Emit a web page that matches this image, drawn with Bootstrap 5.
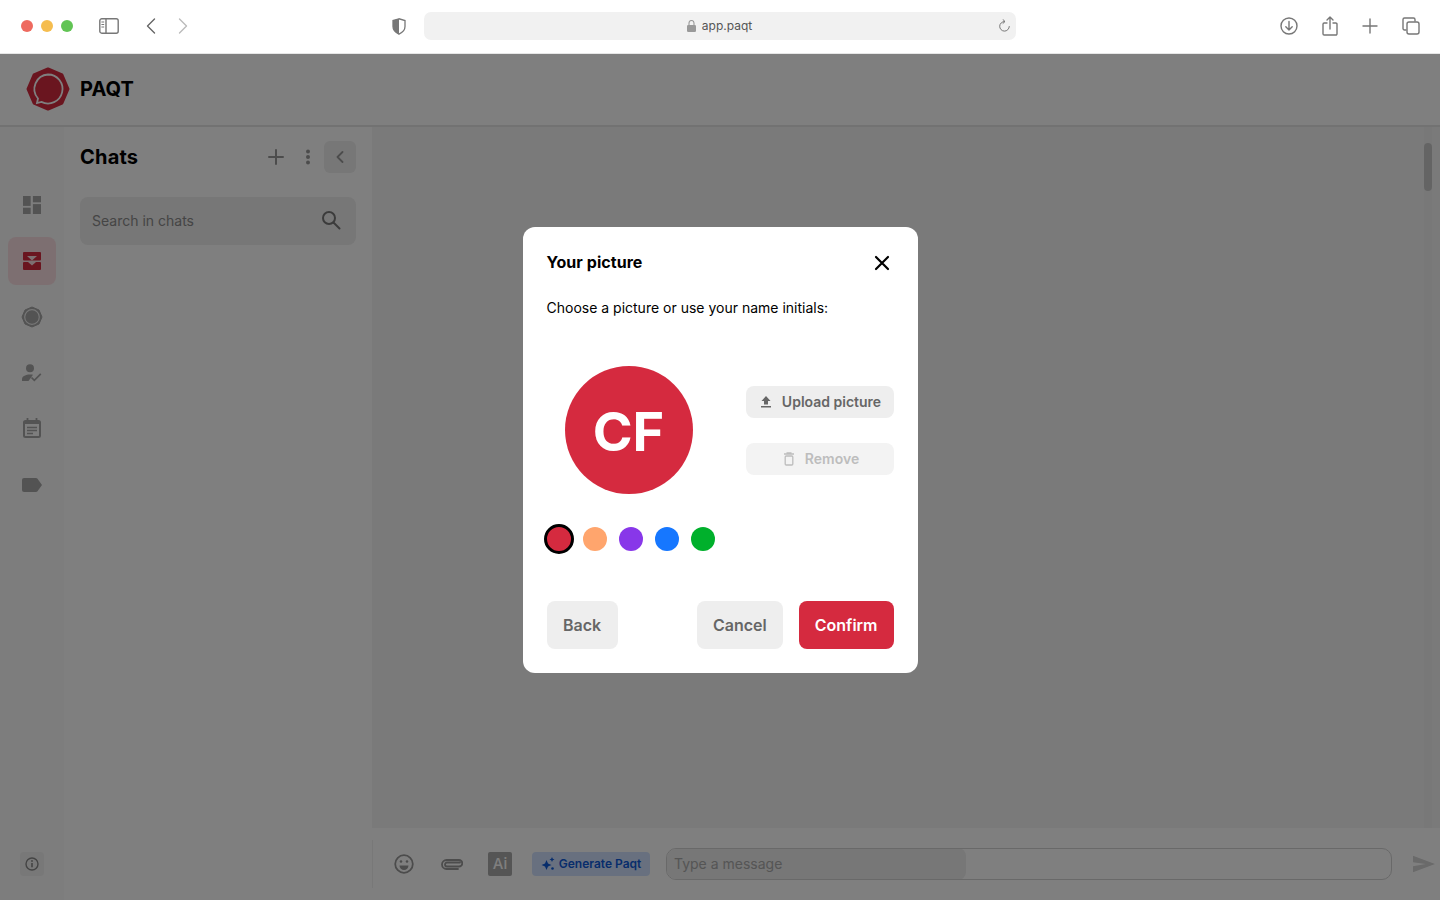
<!DOCTYPE html>
<html lang="en">
<head>
<meta charset="utf-8">
<title>PAQT</title>
<link href="https://cdn.jsdelivr.net/npm/bootstrap@5.3.0/dist/css/bootstrap.min.css" rel="stylesheet">
<style>
html,body{height:100%;overflow:hidden}
body{font-family:Inter,"Liberation Sans",sans-serif;background:#fff;color:#000}
.shell{height:900px;display:flex;flex-direction:column}
.safari{height:54px;flex:none;background:#fff;border-bottom:1px solid #e6e6e6;padding:0 20px 1px 21px}
.tl{width:12px;height:12px;border-radius:50%}
.tl-r{background:#ee6a5f}.tl-y{background:#f5bd4f}.tl-g{background:#61c454}
.tls{gap:8px;margin-right:26px}
.ci{stroke:#777;fill:none;stroke-width:1.4;stroke-linecap:round;stroke-linejoin:round;display:block}
.nav-pair{gap:22px;margin-left:27px}
.shield{margin-left:204px;margin-right:18px}
.urlbar{width:592px;height:28px;background:#f1f1f1;border-radius:7px;font-size:12px;color:#555;padding:0 6px 0 5px}
.url-mid{flex:1;gap:6px;padding-left:12px}
.rt-icons{gap:24px;margin-left:auto}
.appwrap{flex:1;min-height:0;position:relative;display:flex;flex-direction:column;background:#fff}
.apphead{height:73px;flex:none;padding:0 0 2px 26px;gap:10px;background:#fff;border-bottom:2px solid #e4e4e4}
.brand{font-size:20px;font-weight:700;letter-spacing:.1px}
.appbody{flex:1;min-height:0;display:flex}
.rail{width:64px;flex:none;background:#fafafa;padding:54px 8px 0}
.railbtn{width:48px;height:48px;border-radius:8px;margin-bottom:8px}
.railbtn.on{background:#fbdfe3}
.railinfo{width:24px;height:24px;background:#f1f1f1;border-radius:4px;margin:auto 0 24px 12px}
.panel{width:308px;flex:none;background:#fff;padding:14px 16px 0}
.panelhead{height:32px}
.paneltitle{font-size:20px;font-weight:700;letter-spacing:.2px;margin:0;line-height:32px}
.collapse-btn{width:32px;height:32px;background:#eee;border-radius:6px}
.searchbox{height:48px;background:#eee;border-radius:8px;margin-top:24px;padding:0 15px 2px 12px;font-size:14px;color:#8a8a8a}
.mainarea{flex:1;min-width:0;display:flex;flex-direction:column}
.chatarea{flex:1;min-height:0;background:#f5f5f5;padding:0 8px 0 0}
.sb-track{width:8px;height:100%;background:#f0f0f0}
.sb-thumb{width:8px;height:48px;background:#c9c9c9;border-radius:4px;margin-top:16px}
.composer{height:72px;flex:none;background:#fff}
.vline{width:1px;height:48px;background:#f0f0f0;margin-right:19px}
.cbtn{width:24px;height:24px}
.aibox{width:24px;height:24px;background:#aaa;border-radius:2px;color:#fff;font-size:15px;font-weight:500;margin:0 20px 0 24px}
.genbtn{width:118px;height:24px;background:#d1e1ff;border-radius:4px;color:#0e5ad8;font-size:12px;font-weight:600;gap:4px;margin-right:16px;white-space:nowrap}
.msgbox{width:726px;height:32px;flex:none;border:1px solid #d2d2d2;border-radius:10px;position:relative;overflow:hidden;margin-right:21px}
.msgfill{width:300px;background:#eee;border-radius:0 8px 8px 0;margin:-1px 0 0 -1px;height:32px;font-size:14px;color:#aaa;padding-left:8px;line-height:32px}
.scrim{position:absolute;inset:0;background:rgba(0,0,0,.5);display:flex;justify-content:center;align-items:flex-start;padding-top:173px}
.dlg{width:395px;height:446px;background:#fff;border-radius:12px;padding:24px;display:flex;flex-direction:column}
.dlg-title{font-size:16px;font-weight:700;line-height:22px;margin:0;letter-spacing:.05px}
.dlg-text{font-size:14px;line-height:20px;margin:25px 0 0;letter-spacing:0}
.picrow{margin-top:48px;height:128px;padding-left:18px}
.avatar-big{width:128px;height:128px;border-radius:50%;background:#d52a3f;color:#fff;font-size:54px;font-weight:700;padding-top:2px}
.sidebtns{width:148px;margin-left:auto;padding-top:20px}
.softbtn{height:32px;width:148px;background:#eee;border-radius:8px;border:0;color:#666;font-size:14px;font-weight:600;gap:10px;padding:0 0 1px 2px}
.softbtn.off{background:#f3f3f3;color:#bdbdbd;margin-top:25px;gap:11px;padding-left:4px}
.swatches{margin-top:30px;height:30px;gap:12px}
.swatch{width:24px;height:24px;border-radius:50%}
.swatch.sel{width:30px;height:30px;border:3px solid #000;margin:0 -3px 0 -3px}
.dlg-foot{margin-top:auto;gap:16px}
.dbtn{height:48px;border-radius:8px;border:0;font-size:16px;font-weight:600;padding:0 16px;background:#eee;color:#666}
.dbtn.back{width:71px;padding:0}
.dbtn.prim{background:#d52a3f;color:#fff}
</style>
</head>
<body>
<div class="shell">
  <div class="safari d-flex align-items-center">
    <div class="d-flex tls"><span class="tl tl-r"></span><span class="tl tl-y"></span><span class="tl tl-g"></span></div>
    <svg class="ci" width="20" height="16" viewBox="0 0 20 16"><rect x=".8" y=".8" width="18.4" height="14.4" rx="2"/><path d="M7 1v14"/><path d="M2.8 4h2M2.8 6.5h2M2.8 9h2" stroke-width="1"/></svg>
    <div class="d-flex nav-pair">
      <svg class="ci" width="10" height="16" viewBox="0 0 10 16" style="stroke:#666"><path d="M8.5 1 1.5 8l7 7"/></svg>
      <svg class="ci" width="10" height="16" viewBox="0 0 10 16" style="stroke:#bbb"><path d="M1.5 1l7 7-7 7"/></svg>
    </div>
    <svg class="shield" width="14" height="17" viewBox="0 0 14 17"><path d="M7 .8 1 2.6v6c0 3.500 2.500 6 6 7.600 3.500-1.600 6-4.100 6-7.600v-6z" fill="#fff" stroke="#777" stroke-width="1.300"/><path d="M7 .8 1 2.600v6c0 3.500 2.500 6 6 7.600z" fill="#777"/></svg>
    <div class="urlbar d-flex align-items-center">
      <div class="url-mid d-flex align-items-center justify-content-center">
        <svg width="9" height="12" viewBox="0 0 9 12"><rect x="0" y="5" width="9" height="7" rx="1.300" fill="#999"/><path d="M2 5V3a2.500 2.500 0 0 1 5 0v2" fill="none" stroke="#999" stroke-width="1.100"/></svg>
        <span>app.paqt</span>
      </div>
      <svg class="ci" width="12" height="14" viewBox="0 0 12 14" style="stroke-width:1"><path d="M6.500 2.500a4.800 4.800 0 1 0 4.800 5"/><path d="M5 .6l2 1.900-2 1.900"/></svg>
    </div>
    <div class="d-flex align-items-center rt-icons">
      <svg class="ci" width="18" height="18" viewBox="0 0 18 18"><circle cx="9" cy="9" r="8"/><path d="M9 4.500v8.500M5.800 9.800 9 13l3.200-3.200"/></svg>
      <svg class="ci" width="16" height="20" viewBox="0 0 16 20"><path d="M5 7H2.200A1.200 1.200 0 0 0 1 8.200v9.600A1.200 1.200 0 0 0 2.200 19h11.600a1.200 1.200 0 0 0 1.200-1.200V8.200A1.200 1.200 0 0 0 13.800 7H11"/><path d="M8 13V1M5 4l3-3 3 3"/></svg>
      <svg class="ci" width="16" height="16" viewBox="0 0 16 16"><path d="M8 1v14M1 8h14"/></svg>
      <svg class="ci" width="18" height="18" viewBox="0 0 18 18"><path d="M4 13H2.500A1.500 1.500 0 0 1 1 11.500v-9A1.500 1.500 0 0 1 2.500 1h9A1.500 1.500 0 0 1 13 2.500V4"/><rect x="5" y="5" width="12" height="12" rx="2"/></svg>
    </div>
  </div>

  <div class="appwrap">
    <div class="apphead d-flex align-items-center">
      <svg width="44" height="44" viewBox="0 0 44 44"><polygon points="22,2 36,8 42,22 36,36 22,42 8,36 2,22 8,8" fill="#d52a3f" stroke="#d52a3f" stroke-width="3" stroke-linejoin="round"/><path d="M22 7.500a14.500 14.500 0 1 1-6.600 27.400L11 36l1-4.500A14.500 14.500 0 0 1 22 7.500z" fill="none" stroke="#fff" stroke-width="1.800"/></svg>
      <div class="brand">PAQT</div>
    </div>
    <div class="appbody">
      <div class="rail d-flex flex-column">
        <div class="railbtn d-flex align-items-center justify-content-center">
          <svg width="18" height="18" viewBox="0 0 20 20" fill="#a6a6a6"><rect width="8.500" height="11"/><rect x="11" width="9" height="7"/><rect y="13" width="8.500" height="7"/><rect x="11" y="9" width="9" height="11"/></svg>
        </div>
        <div class="railbtn on d-flex align-items-center justify-content-center">
          <svg width="18" height="18" viewBox="0 0 18 18"><rect width="18" height="8.500" rx="1" fill="#d52a3f"/><path d="M4 4h10L9 8.500z" fill="#fbdfe3"/><rect y="10" width="18" height="8" rx="1" fill="#d52a3f"/><path d="M5 10h8L9 13.500z" fill="#fbdfe3"/></svg>
        </div>
        <div class="railbtn d-flex align-items-center justify-content-center">
          <svg width="22" height="22" viewBox="0 0 22 22"><polygon points="11,1 18,4 21,11 18,18 11,21 4,18 1,11 4,4" fill="#a6a6a6" stroke="#a6a6a6" stroke-linejoin="round"/><circle cx="11" cy="11" r="7.300" fill="#a6a6a6" stroke="#eee" stroke-width="1.200"/></svg>
        </div>
        <div class="railbtn d-flex align-items-center justify-content-center">
          <svg width="20" height="18" viewBox="0 0 20 18" fill="#a6a6a6"><circle cx="8" cy="4.200" r="4"/><path d="M0 17v-2c0-3 4-4.500 8-4.500 1 0 2 .1 3 .3L6.500 17z"/><path d="M9.500 13.500l2.800 2.800 6.500-6.500" fill="none" stroke="#a6a6a6" stroke-width="1.700"/></svg>
        </div>
        <div class="railbtn d-flex align-items-center justify-content-center" style="margin-top:-1px">
          <svg width="18" height="20" viewBox="0 0 18 20"><rect x="1" y="3" width="16" height="16" rx="1.500" fill="none" stroke="#a6a6a6" stroke-width="2"/><rect x="1" y="3" width="16" height="3" fill="#a6a6a6"/><path d="M4.500 0v3M13.500 0v3" stroke="#a6a6a6" stroke-width="1.800"/><path d="M4 9.500h10M4 12.500h10M4 15.500h6" stroke="#a6a6a6" stroke-width="1.500"/></svg>
        </div>
        <div class="railbtn d-flex align-items-center justify-content-center" style="margin-top:1px">
          <svg width="20" height="14" viewBox="0 0 20 14" fill="#a6a6a6"><path d="M2 0h12c.6 0 1.100.3 1.500.8L20 7l-4.500 6.200c-.4.5-.9.800-1.500.800H2a2 2 0 0 1-2-2V2a2 2 0 0 1 2-2z"/></svg>
        </div>
        <div class="railinfo d-flex align-items-center justify-content-center">
          <svg width="14" height="14" viewBox="0 0 14 14"><circle cx="7" cy="7" r="6" fill="none" stroke="#888" stroke-width="1.400"/><path d="M7 6v4.200" stroke="#888" stroke-width="1.600"/><circle cx="7" cy="4" r=".9" fill="#888"/></svg>
        </div>
      </div>
      <div class="panel">
        <div class="panelhead d-flex align-items-center">
          <h2 class="paneltitle me-auto">Chats</h2>
          <svg class="ci" width="16" height="16" viewBox="0 0 16 16" style="stroke:#999;stroke-width:2;margin-right:21px"><path d="M8 1v14M1 8h14"/></svg>
          <svg width="6" height="16" viewBox="0 0 6 16" fill="#999" style="margin-right:13px"><circle cx="3" cy="2.500" r="2"/><circle cx="3" cy="8" r="2"/><circle cx="3" cy="13.500" r="2"/></svg>
          <div class="collapse-btn d-flex align-items-center justify-content-center">
            <svg class="ci" width="8" height="12" viewBox="0 0 8 12" style="stroke:#999;stroke-width:1.800"><path d="M6.500 1 1.500 6l5 5"/></svg>
          </div>
        </div>
        <div class="searchbox d-flex align-items-center justify-content-between">
          <span>Search in chats</span>
          <svg width="20" height="20" viewBox="0 0 20 20" fill="none" stroke="#777" stroke-width="2"><circle cx="8" cy="8" r="6"/><path d="M12.500 12.500 18.500 18.500" stroke-linecap="round"/></svg>
        </div>
      </div>
      <div class="mainarea">
        <div class="chatarea d-flex justify-content-end">
          <div class="sb-track"><div class="sb-thumb"></div></div>
        </div>
        <div class="composer d-flex align-items-center">
          <div class="vline"></div>
          <div class="cbtn d-flex align-items-center justify-content-center me-4">
            <svg width="20" height="20" viewBox="0 0 20 20" fill="none" stroke="#999" stroke-width="1.800"><circle cx="10" cy="10" r="8.800"/><circle cx="7" cy="7.500" r="1.300" fill="#999" stroke="none"/><circle cx="13" cy="7.500" r="1.300" fill="#999" stroke="none"/><path d="M5.500 11.500h9a4.500 4.500 0 0 1-9 0z" fill="#999" stroke="none"/></svg>
          </div>
          <div class="cbtn d-flex align-items-center justify-content-center">
            <svg width="22" height="12" viewBox="0 0 22 12" fill="none" stroke="#999" stroke-width="1.800" stroke-linecap="round"><path d="M19 4.500H6a2 2 0 0 0 0 4h12a3 3 0 0 0 0-6.500H5.500a4.500 4.500 0 0 0 0 9H17"/></svg>
          </div>
          <div class="aibox d-flex align-items-center justify-content-center">Ai</div>
          <div class="genbtn d-flex align-items-center justify-content-center">
            <svg width="14" height="14" viewBox="0 0 14 14" fill="#0e5ad8"><path d="M5.500 3 7 6.500 10.500 8 7 9.500 5.500 13 4 9.500.5 8 4 6.500z"/><path d="M11 0l.8 1.700 1.700.8-1.700.8L11 5l-.8-1.700-1.700-.8 1.700-.8z"/><circle cx="11.500" cy="11.500" r="1.300"/></svg>
            <span>Generate Paqt</span>
          </div>
          <div class="msgbox"><div class="msgfill">Type a message</div></div>
          <svg width="22" height="18" viewBox="0 0 24 18" fill="#d4d4d4" style="flex:none"><path d="M0 0 24 9 0 18v-6.500L14 9 0 7z"/></svg>
        </div>
      </div>
    </div>

    <div class="scrim">
      <div class="dlg">
        <div class="d-flex align-items-center justify-content-between">
          <h2 class="dlg-title">Your picture</h2>
          <svg width="16" height="16" viewBox="0 0 16 16" stroke="#000" stroke-width="2.200" stroke-linecap="round" style="margin:1px 4px 0 0"><path d="M2 2l12 12M14 2 2 14"/></svg>
        </div>
        <p class="dlg-text">Choose a picture or use your name initials:</p>
        <div class="picrow d-flex">
          <div class="avatar-big d-flex align-items-center justify-content-center">CF</div>
          <div class="sidebtns">
            <button class="softbtn d-flex align-items-center justify-content-center" type="button">
              <svg width="12" height="13" viewBox="0 0 12 13" fill="#666"><path d="M6 1 10.500 6H8v3.500H4V6H1.500z"/><rect x="1" y="11" width="10" height="1.500"/></svg>
              <span>Upload picture</span>
            </button>
            <button class="softbtn off d-flex align-items-center justify-content-center" type="button">
              <svg width="10" height="14" viewBox="0 0 10 14" fill="none" stroke="#bdbdbd" stroke-width="1.300"><path d="M0 2h10M2.500 1h5"/><rect x="1.200" y="4" width="7.600" height="9" rx="1"/></svg>
              <span>Remove</span>
            </button>
          </div>
        </div>
        <div class="swatches d-flex align-items-center">
          <span class="swatch sel" style="background:#d52a3f"></span>
          <span class="swatch" style="background:#ffa56d"></span>
          <span class="swatch" style="background:#8837e9"></span>
          <span class="swatch" style="background:#1677ff"></span>
          <span class="swatch" style="background:#00b02c"></span>
        </div>
        <div class="dlg-foot d-flex">
          <button class="dbtn back me-auto" type="button">Back</button>
          <button class="dbtn" type="button">Cancel</button>
          <button class="dbtn prim" type="button">Confirm</button>
        </div>
      </div>
    </div>
  </div>
</div>
<script src="https://cdn.jsdelivr.net/npm/bootstrap@5.3.0/dist/js/bootstrap.bundle.min.js"></script>
</body>
</html>
